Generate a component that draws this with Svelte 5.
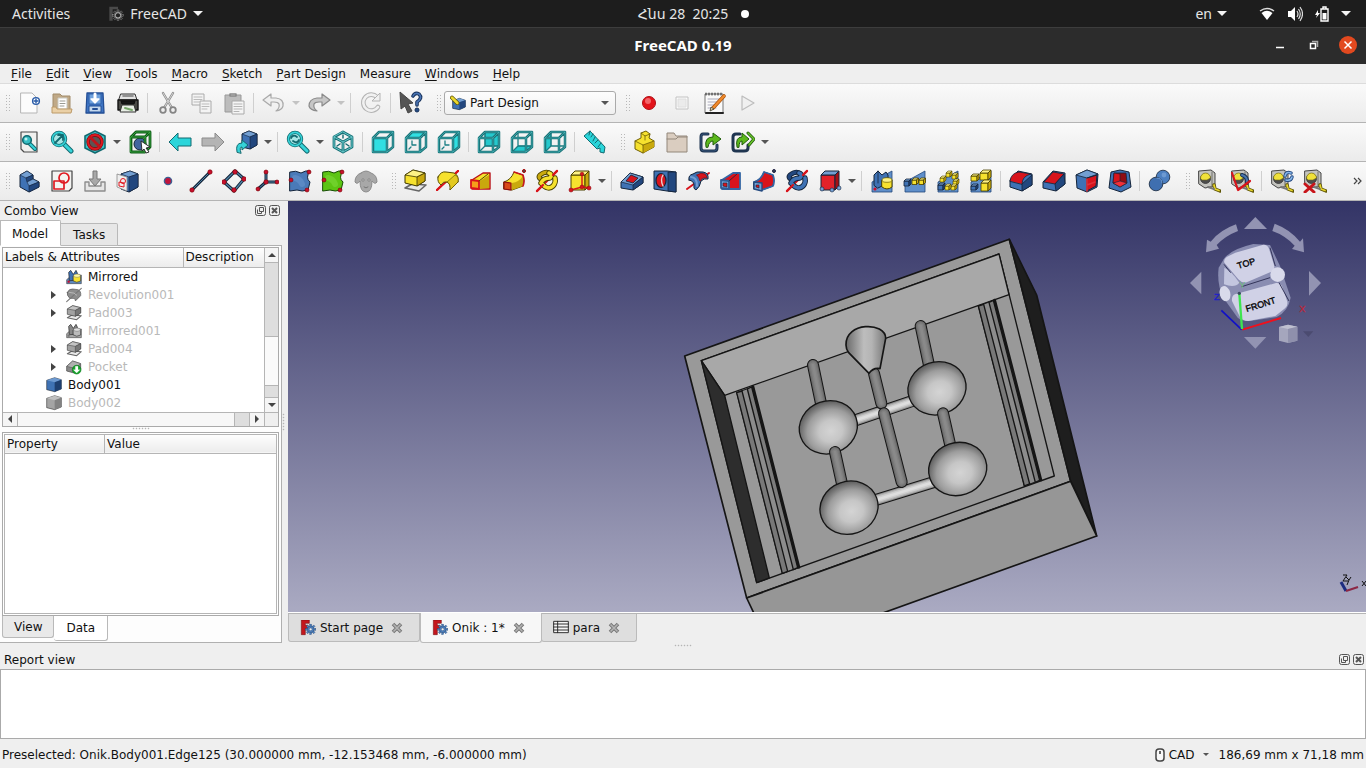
<script>
  const p = (pts, fill, stroke = '#222', w = 1) =>
    `<polygon points="${pts}" fill="${fill}" stroke="${stroke}" stroke-width="${w}" stroke-linejoin="round"/>`;
  const d = (path, stroke, w = 1, fill = 'none') =>
    `<path d="${path}" fill="${fill}" stroke="${stroke}" stroke-width="${w}" stroke-linejoin="round" stroke-linecap="round"/>`;
  const c = (x, y, r, fill, stroke = '#222', w = 1) =>
    `<circle cx="${x}" cy="${y}" r="${r}" fill="${fill}" stroke="${stroke}" stroke-width="${w}"/>`;
  const two = (path, dark, light, w = 3) => d(path, dark, w) + d(path, light, w - 2);
  const box = (x, y, w, h, k, f, t, s, st = '#222', sw = 1) =>
    p(`${x},${y + k} ${x + w},${y + k} ${x + w},${y + h + k} ${x},${y + h + k}`, f, st, sw) +
    p(`${x},${y + k} ${x + k},${y} ${x + w + k},${y} ${x + w},${y + k}`, t, st, sw) +
    p(`${x + w},${y + k} ${x + w + k},${y} ${x + w + k},${y + h} ${x + w},${y + h + k}`, s, st, sw);

  const Y = '#f6e12e', Yd = '#c9a90d', B = '#3f72b4', Bd = '#22477e', Bl = '#739fd2', R = '#d8141c', Rd = '#8f0c12', K = '#14243a';

  const faces = {
    front: '2,8 16,8 16,22 2,22', top: '2,8 8,2 22,2 16,8', right: '16,8 22,2 22,17 16,22',
    back: '8,2 22,2 22,16 8,16', bottom: '2,22 8,16 22,16 16,22', left: '2,8 8,2 8,16 2,22'
  };
  const view = (name) => {
    const wire = 'M2,8H16V22H2ZM2,8L8,2H22V17L16,22M16,8L22,2';
    const rear = 'M8,2V16H22M8,16L2,22';
    const front = ['front', 'top', 'right'].includes(name);
    const inside = name === 'front' ? '' : d(front ? 'M8,11V15L12,15M7,17L5,19' : rear, '#1b7f84', 1.3);
    const fill = p(faces[name], front ? '#30dfe2' : '#25c8cd', '#1b7f84', 0.8);
    return (front ? inside + fill : fill + inside) + two(wire, '#1a7378', '#5fcfd0', 2.5);
  };
  const lens = (inner) =>
    d('M14,14L21,21', '#126a70', 5) + d('M14,14L21,21', '#36d3d8', 3) +
    c(9, 9, 6.6, '#a6e6e6', '#126a70', 3.2) + c(9, 9, 6.6, 'none', '#36d3d8', 1.6) + inner;
  const arrowL = (f, s) => p('1,12 10,3 10,8 23,8 23,16 10,16 10,21', f, s, 1);
  const slab = p('2,13 2,23 22,23 22,2', '#5f8fca', '#24487a', 0.8);
  const tape = (extra = '') =>
    d('M2,2L14,1L18,4L18,17L8,19L2,15Z', '#444', 1, '#c4c4bf') + d('M15,3V17', '#8f8f8b', 1.6) + c(8.500, 9.500, 5, '#4d4d4d', '#333', 0.8) +
    d('M3.500,9A5,5 0 0 1 13.500,9L10,11H5Z', '#6c6414', 0.6, '#f0e13a') + d('M17,16L18,20L23,22', '#5e5404', 3.4) +
    d('M17,16L18,20L22,21.500', '#e6d52c', 1.8) + d('M11,18L17,20', '#777', 2) + extra;
  const gear = (x, y, r, col, st) => {
    let s = '';
    for (let i = 0; i < 8; i++) s += `<rect x="${x - r / 4}" y="${y - r * 1.35}" width="${r / 2}" height="${r * 0.8}" fill="${col}" stroke="${st}" stroke-width=".5" transform="rotate(${i * 45} ${x} ${y})"/>`;
    return s + c(x, y, r * 0.85, col, st, 0.6) + c(x, y, r * 0.35, '#eee', st, 0.6);
  };
  const mirror = (a, b, s, body, dot) =>
    p('1,16 9,9 23,9 23,22 1,22', s, '#333', 0.8) + d('M5,17L4,5L7,2L11,8L15,2L17,6V16Z', '#222', 1, a) +
    d('M11,10Q16,6 22,10V18Q16,22 11,18Z', '#333', 1, body) + `<ellipse cx="16.500" cy="10" rx="5" ry="2.500" fill="${b}" stroke="#555" stroke-width=".6"/>` + c(4, 19, 1.8, dot, 'none', 0);
  const pad = (f, t, s, st) =>
    p('2,19 9,15 23,16 16,22', '#e8e8e8', '#666', 1.6) +
    p('2,6 10,1 22,4 22,12 14,17 2,14', f, st, 1) + p('2,6 10,1 22,4 14,8', t, st, 0.8) + p('14,8 22,4 22,12 14,17', s, st, 0.8);
  const bodyCube = (f, t, s) => p('1,5 13,1 23,4 23,18 13,22 1,19', f, '#222', 0.8) + p('1,5 13,1 23,4 13,8', t, 'none', 0) + p('13,8 23,4 23,18 13,22', s, 'none', 0);
  const helix = (st, back, front) =>
    d('M9,12Q2,9 5,6Q12,1 15,5', st, 5) + d('M9,12Q2,9 5,6Q12,1 15,5', back, 3.2) +
    d('M2,22L22,2', R, 2.2) +
    d('M14,4Q18,5 15,9Q8,9 6,14M6,14Q13,22 18,17Q21,14 20,9', st, 5.4) + d('M14,4Q18,5 15,9Q8,9 6,14M6,14Q13,22 18,17Q21,14 20,9', front, 3.6) +
    d('M2,22L8,16M18,6L22,2', R, 2.2);

  const icons = {
    new: d('M4,2H15L20,7V22H4Z', '#b5b5b5', 1, '#fcfcfc') + c(19, 10, 3.4, '#fff', '#2a5ca8', 1.4) + d('M19,8V12M17,10H21', '#2a5ca8', 1.4),
    open: p('3,3 10,3 12,5 20,5 20,19 3,19', '#c0a987', '#a28c6b', 1) + p('8,7 17,7 17,18 8,18', '#fff', '#c8c8c0', 1) + d('M10,10H15M10,12.5H15M10,15H14', '#9a9a92') + p('2,16 6,16 7,18 22,18 21,22 2,22', '#ead0a6', '#bc9a69', 1),
    save: d('M4,2H20L21,22H3Z', '#234e94', 1.3, '#3f75c4') + p('6,3 18,3 18,13 6,13', '#6fa1dd', '#2f60a8', 1) + d('M12,3V9', '#fff', 3) + d('M8,8L12,12L16,8Z', '#fff', 1.3, '#fff') + p('6,15 18,15 18,21 6,21', '#c3d8ee', '#234e94', 1) + d('M10,18H14', '#234e94', 2),
    print: d('M5,3H19L21,9H3Z', '#333', 1, '#e2e2e2') + d('M2,9H22V19H2Z', '#111', 1.4, '#4a4a46') + p('5,10 19,10 18,13 6,13', '#171717', '#111') + d('M7,5H17', '#777', 1.6) + p('6,14 18,14 20,21 4,21', '#e8eee5', '#333') + d('M9,17L16,19', '#78a86b', 2),
    cut: d('M7,2L16,17M17,2L8,17', '#8b8b8b', 2.4) + d('M7,2L16,17M17,2L8,17', '#ddd', 0.9) + c(7, 19, 2.8, '#eee', '#858585', 1.8) + c(17, 19, 2.8, '#eee', '#858585', 1.8),
    copy: p('3,3 15,3 15,14 3,14', '#f4f4f4', '#aaa') + d('M5,6H13M5,8.5H13M5,11H10', '#bbb') + p('11,10 22,10 22,22 11,22', '#f4f4f4', '#aaa') + d('M13,13H20M13,15.5H20M13,18H18', '#bbb'),
    paste: p('3,4 19,4 19,21 3,21', '#bcbcbc', '#999') + d('M8,5V3H14V5Z', '#888', 1.5, '#ddd') + p('10,10 22,10 22,23 10,23', '#f5f5f5', '#aaa') + d('M12,13H20M12,15.5H20M12,18H20M12,20.5H17', '#b5b5b5'),
    undo: d('M1,9L9,3V7H14Q22,8 21,15Q20,19 14,20Q18,17 17,13Q16,11 12,11H9V15Z', '#a9a9a9', 1.2, '#efefef'),
    redo: d('M23,9L15,3V7H10Q2,8 2,15Q3,19 10,20Q6,17 7,13Q8,11 12,11H15V15Z', '#8a8a8a', 1.2, '#c6c6c6'),
    refresh: d('M18,6A8,8 0 1 0 19,16', '#b4b4b4', 4.6) + d('M18,6A8,8 0 1 0 19,16', '#f1f1f1', 2.6) + p('13,10 21,2 21,10', '#f1f1f1', '#b4b4b4', 1),
    whats: p('1,1 14,12 9,13 13,20 9,22 6,15 2,18', '#555', '#444', 1) + d('M14,5Q16,1 20,3Q24,7 18,11V14', '#17325c', 3.6) + d('M14,5Q16,1 20,3Q24,7 18,11V14', '#4a74b4', 1.6) + c(18, 19, 2, '#254b83', '#17325c', 1),
    rec: c(12, 12, 6.5, '#e3141b', '#b00e14', 1) + c(11, 10, 3, '#f3666a', 'none', 0),
    stop: p('6,6 18,6 18,18 6,18', '#fbfbfb', '#c2c2c2') + p('8,8 16,8 16,16 8,16', '#ebebeb', '#dedede'),
    macro: p('2,3 20,3 20,22 2,22', '#fafafa', '#777', 1) + d('M3,22H20', '#222', 2) + d('M3,2V4M6,2V4M9,2V4M12,2V4M15,2V4M18,2V4', '#444', 1.2) + d('M5,8H17M5,11H16M5,14H14M5,17H13', '#aab') + d('M10,17L21,5', '#a44d09', 3.6) + d('M10,17L21,5', '#f08b2c', 2.4) + p('8,16 7,20 11,18', '#f0d4a8', '#554'),
    play: p('6,5 18,12 6,19', '#f0f0f0', '#bdbdbd', 1.2),
    fitall: d('M4,2H20V22H7L4,19Z', '#4a4a4a', 1.2, '#f0f0ee') + d('M12,13L18,19', '#126a70', 4) + d('M12,13L18,19', '#36d3d8', 2) + c(10, 10, 4.3, '#36bdc2', '#126a70', 1.6) + c(9, 9, 1.5, '#b9f4f2', 'none', 0),
    fitsel: lens(d('M5,13L12,6M8,5H13V10', '#126a70', 1.8)),
    nostyle: p('12,1 22,6 22,18 12,23 2,18 2,6', '#37c9cf', '#126a70', 1.6) + c(12, 12, 7, '#5c5554', '#7b0b10', 3.4) + c(12, 12, 7, 'none', '#dd1a20', 2) + d('M7,7L17,17', '#c2141a', 2.6),
    boxsel: c(12, 14, 6, '#42659e', K, 1) + two('M3,7H17V22H3ZM3,7L8,2H22V17L17,22M17,7L22,2', '#0c5a14', '#3fb046', 2.8) + p('13,11 22,17 18,18 21,22 18,23 16,19 14,21', '#fff', '#222', 0.9),
    back: arrowL('#2bd5da', '#126a70'),
    fwd: `<g transform="translate(24 0) scale(-1 1)">${arrowL('#b4b4b4', '#8b8b8b')}</g>`,
    link: p('8,4 15,1 23,4 23,15 16,19 8,17', B, K, 1) + p('8,4 15,1 23,4 16,7', Bl, K, 0.6) + p('16,7 23,4 23,15 16,19', Bd, K, 0.6) + d('M3,22Q1,13 8,13V10L14,15L8,20V17Q5,17 7,23Z', '#126a70', 1, '#36d3d8'),
    zoomv: lens(d('M5,8Q7,4 11,7M13,10Q11,14 7,11', '#126a70', 1.8)),
    iso: d('M12,2L21,7V17L12,22L3,17V7ZM3,7L12,12L21,7M12,12V22', '#1a7378', 2.8) + d('M12,2L21,7V17L12,22L3,17V7ZM3,7L12,12L21,7M12,12V22', '#6fd0d2', 0.9) + d('M12,5V8M6,16L9,14M18,16L15,14', '#126a70', 1.4),
    front: view('front'), top: view('top'), right: view('right'), rear: view('back'), bottom: view('bottom'), left: view('left'),
    measure: p('1,6 7,1 22,17 21,23 17,22 17,18 14,19', '#2bd5da', '#126a70', 1) + d('M7,1L6,5M10,4L8,7M12,7L10,11M15,10L12,13M18,13L15,17', '#126a70', 1),
    part: p('3,11 9,8 9,3 14,1 18,4 17,8 22,11 22,17 11,23 3,19', Y, '#6f5e04', 1) + p('11,15 22,11 22,17 11,23', Yd, 'none', 0) + d('M3,11L11,15V23M11,15L22,11M9,3L13,6L18,4M13,6V10', '#6f5e04', 0.8),
    group: p('2,3 9,3 11,6 22,6 22,22 2,22', '#dacdc0', '#92877a', 1) + d('M2,9H11L13,7H22', '#92877a', 1),
    linkmake: d('M10,4H5Q3,4 3,7V18Q3,21 6,21H16Q19,21 19,18V15', '#1f3550', 3) + d('M10,4H5Q3,4 3,7V18Q3,21 6,21H16Q19,21 19,18V15', '#3a5c85', 0.8) + d('M8,17Q6,7 15,7V3L23,9L15,15V11Q11,11 10,17Z', '#205c0a', 1, '#5cb81c'),
    linkgroup: d('M9,4H5Q2,4 2,7V18Q2,21 5,21H13Q17,21 17,18V15', '#1f3550', 3) + d('M6,17Q4,7 11,7V3L18,9L11,15V11Q8,11 8,17Z', '#205c0a', 1, '#5cb81c') + d('M17,3L23,9L18,15', '#205c0a', 3) + d('M17,3L23,9L18,15', '#6cc62c', 1.4),
    body: p('3,6 10,2 16,6 16,10 22,13 22,18 12,23 3,18', B, K, 1) + p('3,6 10,2 16,6 9,9', Bl, K, 0.6) + p('9,9 16,6 16,10 10,13', Bd, K, 0.6) + p('10,13 16,10 22,13 12,17', Bl, K, 0.6) + p('12,17 22,13 22,18 12,23', Bd, K, 0.6),
    sketch: d('M2,2H22V19L19,22H2Z', '#444', 1.2, '#f3f3f1') + p('4,12 14,12 14,20 4,20', 'none', '#e01820', 1.7) + c(14, 9, 5, 'none', '#e01820', 1.7),
    import: d('M2,13H6V17H18V13H22V22H2Z', '#8d8d8d', 1.4, '#e6e6e6') + p('10,2 14,2 14,10 18,10 12,17 6,10 10,10', '#a8a8a8', '#777', 1),
    mapsk: p('5,5 14,2 22,5 22,18 13,23 5,20', B, K, 1) + p('5,5 14,2 22,5 13,8', Bl, K, 0.6) + p('13,8 22,5 22,18 13,23', Bd, K, 0.6) + p('1,5 11,8 11,22 1,18', '#eee', '#888', 0.8) + p('3,13 8,14 8,18 3,17', 'none', '#e01820', 1) + c(7, 12, 2.5, 'none', '#e01820', 1),
    point: c(12, 12, 3.6, '#c0143c', '#3c5f92', 1.4),
    line: two('M3,21L21,3', K, '#4f86a8', 3) + c(3, 21, 2.2, '#c8102e', '#700', 0.6) + c(21, 3, 2.2, '#c8102e', '#700', 0.6),
    plane: two('M2,13L13,2L22,10L12,22Z', K, '#4f86a8', 3.2) + c(2, 13, 2.3, '#c8102e', '#700', 0.6) + c(13, 3, 2.3, '#c8102e', '#700', 0.6) + c(22, 10, 2.3, '#c8102e', '#700', 0.6) + c(12, 21, 2.3, '#c8102e', '#700', 0.6),
    lcs: two('M11,3V13L3,20M11,13H22', K, '#4f86a8', 3) + c(11, 3, 2, '#c8102e', '#700', 0.6) + c(3, 20, 2, '#c8102e', '#700', 0.6) + c(22, 13, 2, '#c8102e', '#700', 0.6) + c(11, 13, 2.2, '#c8102e', '#700', 0.6),
    shape: d('M2,3Q8,1 13,4Q18,1 22,2Q17,9 22,13L20,21Q14,23 9,21L2,22Z', K, 1, '#4a7ab8') + d('M7,9Q12,10 14,15', '#5b89c4', 6) + c(21, 3, 2, '#c8102e', '#700', 0.6) + c(3, 11, 2, '#c8102e', '#700', 0.6) + c(19, 21, 2, '#c8102e', '#700', 0.6),
    clone: d('M2,3Q8,1 13,4Q18,1 22,2Q17,9 22,13L20,21Q14,23 9,21L2,22Z', '#174d04', 1, '#5cc414') + d('M7,9Q12,10 14,15', '#6fd02a', 6) + c(21, 3, 2, '#c8102e', '#700', 0.6) + c(3, 11, 2, '#c8102e', '#700', 0.6) + c(19, 21, 2, '#c8102e', '#700', 0.6),
    sheep: d('M7,4Q12,0 17,4Q23,6 23,13Q21,16 18,12Q18,23 12,23Q6,23 6,12Q3,16 1,13Q1,6 7,4Z', '#8b8b8b', 1, '#a8a8a8') + c(9, 11, 1.1, '#eee', '#666', 0.7) + c(15, 11, 1.1, '#eee', '#666', 0.7) + d('M10,18Q12,20 14,18', '#777'),
    pad: pad(Y, '#fdf285', Yd, '#3d3600'),
    rev: d('M1,21L22,2', R, 2) + d('M2,8Q5,2 10,3L18,4Q23,6 22,13L14,21Q15,15 11,13Q7,12 5,16Q1,13 2,8Z', '#554a00', 1, Y) + d('M22,13L14,21Q15,15 11,13L19,6Q23,7 22,13Z', '#554a00', 0.6, '#e3c91f') + d('M20,4L22,2M1,21L5,17', R, 2),
    loft: p('3,11 14,4 21,4 21,20 3,20', Y, '#b81018', 1.4) + p('11,12 20,6 20,19 11,20', Yd, 'none', 0) + p('2,11 10,12 10,20 2,19', '#f5a01a', R, 1.8) + d('M10,12L19,5', '#554a00'),
    sweep: d('M2,13Q9,11 12,3L21,6Q23,12 21,17L10,21L2,20Z', '#554a00', 1, Y) + d('M10,14Q17,13 21,7L21,17L10,21Z', 'none', 0, Yd) + d('M12,3L21,6Q23,12 21,17', '#c81820', 1.6) + p('2,13 9,14 9,21 2,20', '#d94a1a', Rd, 1.2) + c(22, 2, 1.5, '#455', '#a00', 1),
    helix: helix('#4a4000', Yd, Y),
    prim: box(3, 2, 14, 15, 4, Y, '#fdf285', Yd, '#4a4000') + d('M3,21L14,18L21,19M14,18V5', R, 1.4) + c(3, 21, 2, R, Rd, 0.6) + c(14, 18, 2, R, Rd, 0.6) + c(21, 19, 2, R, Rd, 0.6) + c(14, 5, 1.8, R, Rd, 0.6),
    pocket: p('1,13 10,4 23,8 23,14 13,21 1,19', B, K, 1) + p('1,13 10,4 23,8 13,16', Bl, K, 0.7) + p('6,12 11,6 18,9 13,14', R, K, 0.8) + p('13,16 23,8 23,14 13,21', Bd, K, 0.7),
    hole: p('1,2 14,2 23,3 23,23 14,22 1,20', B, K, 1) + p('15,3 23,3 23,23 15,22', Bd, K, 0.8) + `<ellipse cx="8" cy="11.500" rx="5" ry="7" fill="${R}" stroke="${K}" stroke-width="1.200"/>` + d('M10,6Q7,11 10,17', '#e8cfd0', 1.4),
    groove: d('M1,20L23,4', R, 2) + d('M3,11Q2,6 7,5Q10,2 17,3Q23,4 22,10Q18,9 15,12Q14,18 10,21Q7,20 8,16Q8,12 3,11Z', K, 1, B) + d('M11,6Q15,3 19,5Q21,7 21,9Q16,8 14,12Q13,8 11,6Z', Rd, 0.8, R) + d('M5,8Q11,8 11,17', Bl, 2),
    subloft: p('3,11 14,4 21,4 21,20 3,20', R, '#3566a4', 1.8) + p('2,11 10,12 10,20 2,19', Bl, '#2f5c96', 1.8) + p('4,14 8,14 8,18 4,17', R, K, 0.6) + d('M10,12L18,5', K, 0.8),
    subsweep: d('M2,13Q9,11 12,3L21,6Q23,12 21,17L10,21L2,20Z', K, 1, R) + d('M2,13Q9,11 12,3L21,6Q23,12 21,17L10,21', '#3566a4', 1.8) + p('2,13 10,14 10,22 2,20', Bl, '#254b80', 1.4) + p('4,16 7,16 7,19 4,18', R, K, 0.6) + c(22, 2, 1.5, '#345', '#224', 1),
    subhelix: helix(K, Bd, B),
    subprim: box(3, 2, 14, 15, 4, '#e2222a', Bl, '#a51015', K) + c(4, 20, 2, Bl, K, 0.6) + c(14, 21, 2, Bl, K, 0.6) + c(21, 19, 2, Bl, K, 0.6),
    mirrored: slab + d('M4,16L4,6L8,2L12,6L16,3L18,6V14L8,19Z', K, 1, B) + d('M8,2V14', K, 0.8) + d('M12,11Q17,7 22,11V18Q17,22 12,18Z', '#4a4000', 1, Y) + `<ellipse cx="17" cy="11" rx="5" ry="2.300" fill="#fdf285" stroke="#665a00" stroke-width=".7"/>` + c(5, 20, 1.6, '#c8102e', 'none', 0),
    linear: slab + box(1, 10, 5, 5, 2, B, Bl, Bd, K, 0.8) + box(9, 9, 4.5, 4.5, 2, Y, '#fdf285', Yd, '#4a4000', 0.8) + box(16, 9, 4.5, 4.5, 2, Y, '#fdf285', Yd, '#4a4000', 0.8),
    polar: slab + box(2, 14, 5, 5, 2, B, Bl, Bd, K, 0.8) + [[4, 7], [10, 2], [16, 4], [17, 10], [15, 15], [9, 15]].map(([x, y]) => box(x, y, 4, 4, 2, Y, '#fdf285', Yd, '#4a4000', 0.6)).join(''),
    multi: slab + box(11, 1, 8, 7, 3, Y, '#fdf285', Yd, '#4a4000', 0.8) + box(2, 5, 6, 5, 2, Y, '#fdf285', Yd, '#4a4000', 0.8) + box(12, 11, 7, 8, 3, Y, '#fdf285', Yd, '#4a4000', 0.8) + box(2, 15, 5, 4, 2, B, Bl, Bd, K, 0.8),
    fillet: p('1,11 9,2 23,5 23,16 13,22 1,18', B, K, 1) + d('M1,12Q2,4 10,3L22,5Q13,7 13,15Z', K, 0.8, R) + p('13,15 23,6 23,16 13,22', Bd, K, 0.8),
    chamfer: p('1,13 11,2 23,4 23,15 14,22 1,19', B, K, 1) + p('2,13 11,3 22,5 13,15', R, K, 0.8) + p('13,15 22,5 23,15 14,22', Bd, K, 0.8),
    draft: p('1,6 12,1 23,5 22,18 12,23 2,19', B, K, 1) + p('1,6 12,1 23,5 12,9', Bl, K, 0.8) + p('12,9 22,6 21,17 12,22', R, K, 1) + d('M12,10V22M12,16L20,13', '#e23038', 1.6),
    thick: p('3,3 12,1 21,3 23,18 13,23 1,19', B, K, 1) + p('6,4 18,4 19,14 12,18 5,14', Rd, K, 0.8) + p('6,4 12,5 12,13 5,14', R, K, 0.6) + p('5,14 12,12 19,14 12,18', '#f03038', K, 0.6),
    bool: c(15, 8, 6.8, '#4c7fc0', K, 0.8) + c(8, 15, 6.8, '#3f6fb0', K, 0.8) + d('M9,9Q14,9 14,14', '#6f9bd1', 1) + c(16, 6, 2.4, '#6d9ad2', 'none', 0),
    tape: tape(), tape2: tape(d('M12,6Q18,8 17,14', '#1c3558', 4) + d('M12,6Q18,8 17,14', '#4a78b0', 2) + d('M2,4L8,21L20,12', R, 2.2)),
    tape3: tape(d('M15,7Q16,2 21,4M22,8Q21,12 16,11', '#254b83', 3.4) + d('M15,7Q16,2 21,4M22,8Q21,12 16,11', '#86b6ea', 1.6)),
    tape4: tape(d('M2,15L11,23M11,15L2,23', '#c8141a', 3)),
    wb: p('4,9 14,5 23,8 23,18 14,22 4,20', B, K, 1) + p('4,9 14,5 23,8 14,11', Bl, 'none', 0) + p('14,11 23,8 23,18 14,22', Bd, 'none', 0) + d('M3,4L11,12', '#5c5208', 6) + d('M3,4L11,12', '#ecd92c', 4),
    t_mirror: mirror(B, '#fff9a0', '#5c88be', Y, '#c8102e'),
    t_mirrorg: mirror('#888', '#ddd', '#a8a8a8', '#bbb', '#777'),
    t_rev: d('M2,8Q5,2 10,3L18,4Q23,6 22,13L14,21Q15,17 9,17Q5,18 5,16Q1,13 2,8Z', '#555', 1, '#8d8d8d') + d('M1,22L23,2', '#777', 1.6) + d('M5,8Q13,8 16,12', '#bbb', 1.4),
    t_pad: pad('#a2a2a2', '#c4c4c4', '#777', '#444'),
    t_pocket: p('1,11 10,3 22,7 22,15 12,21 1,18', '#888', '#444', 1) + p('1,11 10,3 22,7 13,14', '#b0b0b0', '#555', 0.8) + c(16, 16, 6.5, '#16a32a', '#0c7d1c', 1) + p('14,11 18,11 18,16 21,16 16,21 11,16 14,16', '#fff', '#fff', 0.3),
    t_body: bodyCube('#3f72b4', '#6d99d0', '#1e3f70'),
    t_bodyg: bodyCube('#a4a4a4', '#c0c0c0', '#828282'),
    fc: p('2,0 14,0 14,5 8,5 8,8 12,8 12,13 8,13 8,22 2,22', '#c4161d', '#6c0a0e', 0.8) + gear(16, 14, 5.8, '#4f80bd', '#1d3d68'),
    fcmono: p('2,1 15,1 15,5 7,5 7,22 2,22', '#4a4a4a', 'none', 0) + gear(15, 14, 6, '#303030', '#bbb') + c(15, 14, 4, '#222', '#c8c8c8', 1.3),
    sheet: p('1,2 23,2 23,19 1,19', '#f6f6f6', '#222', 1.4) + d('M1,6H23M1,10.500H23M1,15H23M7,2V19', '#222', 1.4)
  };

  const b = (icon, label, off = false) => ({ icon, label, off });
  const m = (icon, label, off = false) => ({ icon, label, off, menu: true });
  const sep = { sep: true };
  const rows = [
    [
      [b('new', 'New'), b('open', 'Open'), b('save', 'Save'), b('print', 'Print'), sep, b('cut', 'Cut', true), b('copy', 'Copy', true), b('paste', 'Paste', true), sep, m('undo', 'Undo', true), m('redo', 'Redo', true), sep, b('refresh', 'Refresh', true), sep, b('whats', 'Help pointer')],
      [{ combo: true }],
      [b('rec', 'Record macro'), b('stop', 'Stop macro', true), b('macro', 'Macros'), b('play', 'Run macro', true)]
    ],
    [
      [b('fitall', 'Fit all'), b('fitsel', 'Fit selection'), m('nostyle', 'Draw style'), b('boxsel', 'Box selection'), sep, b('back', 'Back'), b('fwd', 'Forward'), m('link', 'Go to linked object'), sep, m('zoomv', 'Sync view'), b('iso', 'Isometric'), sep, b('front', 'Front'), b('top', 'Top'), b('right', 'Right'), sep, b('rear', 'Rear'), b('bottom', 'Bottom'), b('left', 'Left'), sep, b('measure', 'Measure distance')],
      [b('part', 'Create part'), b('group', 'Create group'), b('linkmake', 'Make link'), m('linkgroup', 'Make link group')]
    ],
    [
      [b('body', 'Create body'), b('sketch', 'Create sketch'), b('import', 'Edit sketch'), b('mapsk', 'Map sketch'), sep, b('point', 'Datum point'), b('line', 'Datum line'), b('plane', 'Datum plane'), b('lcs', 'Coordinate system'), b('shape', 'Shape binder'), b('clone', 'Sub-shape binder'), b('sheep', 'Clone')],
      [b('pad', 'Pad'), b('rev', 'Revolution'), b('loft', 'Loft'), b('sweep', 'Pipe'), b('helix', 'Helix'), m('prim', 'Primitive'), sep, b('pocket', 'Pocket'), b('hole', 'Hole'), b('groove', 'Groove'), b('subloft', 'Subtractive loft'), b('subsweep', 'Subtractive pipe'), b('subhelix', 'Subtractive helix'), m('subprim', 'Subtractive primitive'), sep, b('mirrored', 'Mirrored'), b('linear', 'Linear pattern'), b('polar', 'Polar pattern'), b('multi', 'Multi transform'), sep, b('fillet', 'Fillet'), b('chamfer', 'Chamfer'), b('draft', 'Draft'), b('thick', 'Thickness'), sep, b('bool', 'Boolean')],
      [b('tape', 'Measure linear'), b('tape2', 'Measure angular'), sep, b('tape3', 'Refresh measurements'), b('tape4', 'Clear measurements')]
    ]
  ];

  const menus = ['File', 'Edit', 'View', 'Tools', 'Macro', 'Sketch', 'Part Design', 'Measure', 'Windows', 'Help'];
  const tree = [
    ['t_mirror', 'Mirrored', 2, false, true], ['t_rev', 'Revolution001', 2, true, false], ['t_pad', 'Pad003', 2, true, false],
    ['t_mirrorg', 'Mirrored001', 2, false, false], ['t_pad', 'Pad004', 2, true, false], ['t_pocket', 'Pocket', 2, true, false],
    ['t_body', 'Body001', 1, false, true], ['t_bodyg', 'Body002', 1, false, false]
  ];
  const docs = [['fc', 'Start page'], ['fc', 'Onik : 1*'], ['sheet', 'para']];

  const rod = (path, tones) => [36, 30, 24, 16, 8].map((w, i) => d(path, tones[i], w)).join('');
  const dark = ['#151515', '#686868', '#787878', '#838383', '#8a8a8a'];
  const light = ['#151515', '#8d8d8d', '#b4b4b4', '#cecece', '#dedede'];
  const ball = (x, y) => `<ellipse cx="${x}" cy="${y}" rx="88" ry="79" transform="rotate(-19 ${x} ${y})" fill="url(#ball)" stroke="#151515" stroke-width="4"/>`;
  const rail = (x, y, x2, y2) =>
    p(`${x},${y} ${x + 49},${y - 18} ${x2 + 50},${y2 - 18} ${x2},${y2}`, '#8c8c8c', '#151515', 3) +
    p(`${x},${y} ${x + 16},${y - 5} ${x2 + 16},${y2 - 6} ${x2},${y2}`, '#787878', '#151515', 4) +
    p(`${x + 32},${y - 11} ${x + 45},${y - 17} ${x2 + 46},${y2 - 17} ${x2 + 33},${y2 - 11}`, '#7c7c7c', '#151515', 4) +
    d(`M${x + 49},${y - 18}L${x2 + 50},${y2 - 18}`, '#151515', 8);
  const model =
    p('14,378 988,28 1172,754 200,1104', '#999', '#151515', 5) +
    p('988,28 1070,195 1250,918 1172,754', '#1e1e1e', '#151515', 5) +
    p('200,1104 1172,754 1250,918 278,1268', '#969696', '#151515', 5) +
    p('64,392 957,72 1123,738 230,1058', '#999', '#151515', 4) +
    p('64,392 957,72 987,194 134,496', '#a8a8a8', '#151515', 4) +
    p('64,392 134,496 268,1044 230,1058', '#2d2d2d', '#151515', 4) +
    rail(170, 488, 307, 1030) + rail(895, 228, 1033, 768) +
    rod('M520,573L700,512', light) + rod('M580,812L760,757', light) +
    rod('M399,405L425,530', dark) + rod('M722,288L750,420', dark) + rod('M582,430L604,520', dark) +
    d('M498,345C495,275 617,275 617,325L600,416Q580,412 567,430L506,368Q498,358 498,345Z', '#151515', 5, 'url(#cone)') +
    rod('M612,550L665,756', dark) + ball(445, 592) + ball(771, 475) +
    rod('M465,666L490,780', dark) + rod('M789,550L814,660', dark) + ball(507, 833) + ball(833, 717);

  let report = $state('');
</script>

{#snippet ico(name, size = 24)}
  <svg width={size} height={size} viewBox="0 0 24 24" aria-hidden="true">{@html icons[name]}</svg>
{/snippet}

{#snippet dockButtons()}
  <span class="dock-buttons">
    <button aria-label="Float"><svg width="11" height="11" viewBox="0 0 11 11"><rect x=".5" y=".5" width="10" height="10" rx="2" /><path d="M4.500 2.500h4v4h-4zM2.500 4.500v4h4v-2" /></svg></button>
    <button aria-label="Close panel"><svg width="11" height="11" viewBox="0 0 11 11"><rect x=".5" y=".5" width="10" height="10" rx="2" /><path class="thick" d="M3 3l5 5M8 3l-5 5" /></svg></button>
  </span>
{/snippet}

<div class="screen">
  <header class="shell">
    <div class="shell-left">
      <button>Activities</button>
      <button class="app">{@render ico('fcmono', 16)}FreeCAD<i class="tri"></i></button>
    </div>
    <button class="clock">Հնս 28&nbsp; 20:25<i class="dot"></i></button>
    <div class="shell-right">
      <button class="lang">en<i class="tri"></i></button>
      <button class="tray" aria-label="System menu">
        <svg width="16" height="14" viewBox="0 0 16 14"><path d="M1 4Q8-1 15 4" fill="none" stroke="#ddd" stroke-width="1.4" /><path d="M2.500 6Q8 1.500 13.500 6L8 13Z" fill="#fff" /></svg>
        <svg width="16" height="16" viewBox="0 0 16 16"><path d="M1 5h3l4-4v14l-4-4H1Z" fill="#fff" /><path d="M10 5Q12 8 10 11M11.500 3Q15 8 11.500 13M13 1Q18 8 13 15" fill="none" stroke="#ddd" stroke-width="1.200" /></svg>
        <svg width="14" height="16" viewBox="0 0 14 16"><path d="M3 4L0 9h2l-1 3 4-5H3Z" fill="#fff" /><path d="M6 3h7v12H6ZM8 1h3v2H8Z" fill="none" stroke="#fff" stroke-width="1.400" /><path d="M7.500 7h4v6.500h-4Z" fill="#fff" /></svg>
        <i class="tri"></i>
      </button>
    </div>
  </header>

  <div class="titlebar">
    <h1>FreeCAD 0.19</h1>
    <div class="window-buttons">
      <button aria-label="Minimize"><svg width="10" height="10" viewBox="0 0 10 10"><path d="M1 7.500H9" /></svg></button>
      <button aria-label="Restore"><svg width="10" height="10" viewBox="0 0 10 10"><path d="M1.500 3.500h5v5h-5z" /><path d="M3 1.500H8.500V7" opacity=".6" /></svg></button>
      <button class="close" aria-label="Close"><svg width="10" height="10" viewBox="0 0 10 10"><path d="M1.500 1.500l7 7M8.500 1.500l-7 7" /></svg></button>
    </div>
  </div>

  <nav class="menubar">
    {#each menus as item}<button>{#if item === 'Measure'}{item}{:else}<u>{item[0]}</u>{item.slice(1)}{/if}</button>{/each}
  </nav>

  {#each rows as groups, r}
    <div class="toolbar">
      {#each groups as items}
        <div class="group">
          <i class="handle"></i>
          {#each items as it}
            {#if it.sep}
              <i class="sep"></i>
            {:else if it.combo}
              <label class="combo">
                {@render ico('wb', 16)}
                <select aria-label="Workbench"><option>Part Design</option></select>
                <i class="arrow"></i>
              </label>
            {:else}
              <button class="tool" class:off={it.off} aria-label={it.label}>
                <span>{@render ico(it.icon)}</span>
                {#if it.menu}<i class="arrow"></i>{/if}
              </button>
            {/if}
          {/each}
        </div>
      {/each}
      {#if r === 2}<button class="more" aria-label="More tools"><svg width="9" height="8" viewBox="0 0 9 8"><path d="M1 1l3 3-3 3M5 1l3 3-3 3" fill="none" stroke="#444" stroke-width="1.200" /></svg></button>{/if}
    </div>
  {/each}

  <main>
    <aside>
      <div class="dock-title"><h2>Combo View</h2>{@render dockButtons()}</div>
      <div class="tabs"><button class="active">Model</button><button>Tasks</button></div>
      <div class="pane">
        <div class="tree">
          <div class="tree-body">
            <table>
              <thead><tr><th class="labels">Labels &amp; Attributes</th><th>Description</th></tr></thead>
              <tbody>
                {#each tree as [icon, name, depth, kids, on]}
                  <tr class:dim={!on}><td colspan="2"><div class="node" class:deep={depth === 2}><i class="twist" class:kids></i>{@render ico(icon, 16)}<span>{name}</span></div></td></tr>
                {/each}
              </tbody>
            </table>
            <div class="vscroll"><button aria-label="Scroll up"><i class="up"></i></button><div class="track upper"></div><div class="thumb"></div><div class="track lower"></div><button aria-label="Scroll down"><i class="down"></i></button></div>
          </div>
          <div class="hscroll"><button aria-label="Scroll left"><i class="lt"></i></button><div class="thumb"></div><div class="track"></div><button aria-label="Scroll right"><i class="rt"></i></button><div class="corner"></div></div>
        </div>
        <i class="split"></i>
        <div class="props">
          <table><thead><tr><th class="prop">Property</th><th>Value</th></tr></thead></table>
        </div>
        <div class="bottom-tabs"><button>View</button><button class="active">Data</button></div>
      </div>
    </aside>
    <i class="vsplit"></i>

    <section class="mdi">
      <div class="viewport">
        <svg class="scene" viewBox="288 201 1078 411" preserveAspectRatio="xMidYMid slice" aria-label="3D view">
          <defs>
            <radialGradient id="ball" cx=".52" cy=".58" r=".58"><stop offset="0" stop-color="#d4d4d4" /><stop offset=".35" stop-color="#c6c6c6" /><stop offset=".7" stop-color="#9c9c9c" /><stop offset="1" stop-color="#585858" /></radialGradient>
            <linearGradient id="cone"><stop offset="0" stop-color="#6a6a6a" /><stop offset=".45" stop-color="#bdbdbd" /><stop offset=".65" stop-color="#b4b4b4" /><stop offset="1" stop-color="#777" /></linearGradient>
          </defs>
          <g transform="translate(680 230) scale(.33333)">{@html model}</g>
        </svg>
        <svg class="navcube" width="196" height="160" viewBox="0 0 588 480" aria-label="Navigation cube">
          <g fill="#9293b2">
            <path d="M256 48L291 84H222Z" /><path d="M60 246L94 212V280Z" /><path d="M453 246L417 210V284Z" /><path d="M222 408H289L256 443Z" />
            <path d="M198 70L204 90Q165 105 140 132L147 143L108 154L111 116L122 122Q150 87 198 70Z" />
            <path d="M314 68L307 90Q345 103 374 134L366 144L402 154L399 112L390 122Q360 85 314 68Z" />
          </g>
          <path d="M161 175Q180 145 250 129L300 132L330 195L362 290Q355 330 320 348L240 360Q215 360 203 350L160 290Q140 250 146 200Z" fill="#9599bc" opacity=".85" />
          <path d="M196 155L280 131Q292 130 297 143L313 195Q314 208 302 213L230 244Q215 247 205 235L163 185Q160 175 170 168Z" fill="#d0d1e6" />
          <path d="M195 280L318 246Q332 245 337 258L352 302Q354 315 345 322L316 345L235 360Q218 360 210 348L186 300Q184 285 195 280Z" fill="#d0d1e6" />
          <path d="M163 200Q185 210 208 245Q195 262 162 250Z" fill="#c3c6df" />
          <ellipse cx="165" cy="278" rx="16" ry="23" fill="#d9daeb" transform="rotate(-15 165 278)" /><ellipse cx="323" cy="221" rx="22" ry="22" fill="#d9daeb" />
          <path d="M300 140L316 195M215 257L300 230M327 245L357 300M162 190L182 215" stroke="#34355a" stroke-width="3" fill="none" />
          <g font-family="Liberation Sans, sans-serif" fill="#000" stroke="#000" stroke-width="1">
            <text transform="translate(205 204) rotate(-17)" font-size="27">TOP</text><text transform="translate(230 333) rotate(-17)" font-size="27">FRONT</text>
          </g>
          <path d="M154 328L215 386" stroke="#1010c8" stroke-width="5" /><path d="M217 386L333 351" stroke="#f0101c" stroke-width="6" /><path d="M208 278L216 384" stroke="#3de450" stroke-width="7" /><circle cx="208" cy="277" r="5" fill="#3a4a60" />
          <g font-family="Liberation Sans, sans-serif" font-size="28"><text x="132" y="297" fill="#2020c8" stroke="#2020c8">Z</text><text x="388" y="334" fill="#b8283c" stroke="#b8283c">X</text><text x="208" y="261" fill="#6fbf80">Y</text></g>
          <path d="M327 378L354 371L382 377V419L354 426L327 419Z" fill="#a5a6bd" /><path d="M327 378L354 371L382 377L354 384Z" fill="#bfc0d0" /><path d="M354 384L382 377V419L354 426Z" fill="#8f90ac" />
          <path d="M399 391H430L415 408Z" fill="#4b4b70" />
        </svg>
        <svg class="axes" width="28" height="24" viewBox="0 0 28 24" aria-label="Axis cross"><path d="M8 18L3 9" stroke="#1c2c80" stroke-width="3" /><path d="M8 18L20 14" stroke="#8c2744" stroke-width="2" /><path d="M5 2h4L5 8h5M8 4l3 3 2-3M11 7l-2 5M24 8l4 5M28 8l-4 5" stroke="#111" fill="none" /></svg>
      </div>
      <div class="doc-tabs">
        {#each docs as [icon, name], i}
          <div class="doc" class:active={i === 1}>
            <button>{@render ico(icon, 16)}<span>{name}</span></button>
            <button class="x" aria-label="Close tab"><svg width="12" height="12" viewBox="0 0 12 12"><path d="M2 2l8 8M10 2l-8 8" stroke="#777" stroke-width="3.600" /><path d="M2.500 2.500l7 7M9.500 2.500l-7 7" stroke="#b4b4b4" stroke-width="1.600" /></svg></button>
          </div>
        {/each}
      </div>
    </section>
  </main>

  <section class="report">
    <i class="split"></i>
    <div class="dock-title"><label for="report">Report view</label>{@render dockButtons()}</div>
    <textarea id="report" readonly bind:value={report}></textarea>
  </section>

  <footer>
    <span>Preselected: Onik.Body001.Edge125 (30.000000 mm, -12.153468 mm, -6.000000 mm)</span>
    <span class="status-right">
      <button><svg width="10" height="14" viewBox="0 0 10 14"><rect x="1" y="1" width="8" height="12" rx="3" fill="#f8f8f8" stroke="#444" stroke-width="1.500" /><path d="M5 3v3" stroke="#333" stroke-width="1.500" /></svg>CAD<i class="arrow small"></i></button>
      <span>186,69 mm x 71,18 mm</span>
    </span>
  </footer>
</div>

<style>
  :global(body) { margin: 0; background: #efefef; }
  .screen { display: flex; flex-direction: column; min-height: 100vh; box-sizing: border-box; overflow: hidden; background: #efefef; color: #111; font: 12px/18px "DejaVu Sans", sans-serif; }
  .screen :global(*) { box-sizing: border-box; }
  .screen :global(svg) { display: block; flex: none; }
  button { display: flex; align-items: center; margin: 0; padding: 0; border: 0; background: none; color: inherit; font: inherit; white-space: nowrap; }
  h1, h2 { margin: 0; font: inherit; }
  i { display: block; flex: none; }
  table { border-collapse: collapse; border-spacing: 0; }

  .shell { display: grid; grid-template-columns: 1fr auto 1fr; height: 27px; padding: 0 15px 0 12px; background: #1d1d1d; color: #e6e6e6; font: 14px/27px "Noto Sans", "DejaVu Sans", sans-serif; }
  .shell-left { display: flex; gap: 38px; }
  .app { gap: 6px; }
  .clock { padding-left: 24px; gap: 13px; }
  .dot { width: 8px; height: 8px; border-radius: 50%; background: #fff; }
  .shell-right { display: flex; justify-content: flex-end; gap: 32px; }
  .lang { gap: 5px; }
  .tray { gap: 12px; }
  .tri { width: 0; border: 5px solid transparent; border-top-color: #f4f4f4; border-bottom: 0; }
  .titlebar { display: grid; grid-template-columns: 1fr auto 1fr; align-items: center; height: 37px; padding: 0 9px; border-top: 1px solid #3d3d3d; background: #2c2c2c; color: #fff; }
  .titlebar h1 { grid-column: 2; padding-bottom: 2px; font: bold 15px/20px "Noto Sans", sans-serif; }
  .window-buttons { display: flex; justify-content: flex-end; align-items: center; gap: 20px; padding-bottom: 2px; }
  .window-buttons svg { fill: none; stroke: #fff; stroke-width: 1.5; }
  .window-buttons button { justify-content: center; width: 14px; height: 18px; }
  .window-buttons .close { width: 18px; border-radius: 50%; background: #e2491f; margin-left: -2px; }

  .menubar { display: flex; gap: 14px; height: 20px; padding: 0 11px; border-bottom: 1px solid #dcdcdc; }
  u { text-underline-offset: 2px; }
  .toolbar { display: flex; gap: 4px; height: 39px; border-bottom: 1px solid #b4b4b4; background: linear-gradient(#fafafa, #ebebeb); }
  .group { display: flex; align-items: center; }
  .handle { width: 12px; height: 18px; padding: 0 2px 0 5px; background: radial-gradient(circle, #b8b8b8 30%, transparent 45%) 5px 0 / 3px 3px; background-clip: content-box; }
  .tool { height: 34px; }
  .tool span { display: flex; justify-content: center; width: 33px; }
  .tool.off .arrow { opacity: 0.3; }
  .arrow { width: 0; border: 4px solid transparent; border-top-color: #555; border-bottom: 0; }
  .tool .arrow { margin: 0 2px; }
  .arrow.small { border-width: 3px 3px 0; }
  .sep { width: 1px; height: 20px; margin: 0 3px; background: #cfcfcf; }
  .combo { display: flex; align-items: center; width: 172px; height: 24px; margin-left: 1px; padding: 0 6px 0 5px; border: 1px solid #aaa; border-radius: 3px; background: linear-gradient(#fdfdfd, #f0f0f0); }
  .combo select { flex: 1; min-width: 0; appearance: none; border: 0; padding: 0 4px; background: none; color: inherit; font: inherit; }
  .more { margin-left: auto; padding-right: 4px; }

  main { display: flex; flex: 1; min-height: 442px; }
  aside { display: flex; flex-direction: column; flex: none; width: 282px; }
  .dock-title { display: flex; align-items: center; justify-content: space-between; height: 19px; padding: 0 2px 0 4px; }
  .dock-buttons { display: flex; gap: 3px; }
  .dock-buttons svg { fill: none; stroke: #555; stroke-width: 1; }
  .dock-buttons .thick { stroke-width: 2; }
  .tabs { display: flex; align-items: flex-end; height: 26px; margin-bottom: -1px; position: relative; }
  .tabs button { justify-content: center; height: 23px; padding: 0 12px; border: 1px solid #b9b9b9; border-left: 0; border-radius: 0 2px 0 0; background: #e7e7e7; }
  .tabs .active { height: 26px; padding: 2px 12px 0 11px; border-left: 1px solid #b9b9b9; border-bottom-color: #fff; background: #fff; }
  .pane { display: flex; flex: 1; flex-direction: column; padding: 1px 2px 0; border: 1px solid #b0b0b0; border-left-width: 0; background: #fdfdfd; }
  .tree { border: 1px solid #aaa; background: #fff; }
  .tree-body { display: flex; }
  .tree table { flex: 1; }
  th { height: 19px; padding: 1px 2px 0; border-bottom: 1px solid #b5b5b5; background: linear-gradient(#fefefe, #ececec); font-weight: normal; line-height: 17px; text-align: left; }
  .labels { width: 180px; border-right: 1px solid #b5b5b5; }
  td { padding: 0; height: 18px; }
  .node { display: flex; align-items: center; gap: 6px; height: 18px; padding-left: 26px; }
  .node.deep { padding-left: 46px; }
  .twist { width: 11px; height: 8px; }
  .kids { border: 4px solid transparent; border-left: 5px solid #444; border-right: 0; width: 0; margin-left: 2px; margin-right: 4px; }
  .dim { color: #b9b9b9; }
  .vscroll { display: flex; flex-direction: column; width: 14px; border-left: 1px solid #b5b5b5; }
  .vscroll button, .hscroll button { justify-content: center; flex: none; background: #f5f5f5; }
  .vscroll button { height: 14px; }
  .track { background: #dedede; }
  .vscroll .upper { flex: 1; border-top: 1px solid #b5b5b5; }
  .vscroll .thumb { height: 50px; border: solid #b5b5b5; border-width: 1px 0; background: #fafafa; }
  .vscroll .lower { height: 12px; border-bottom: 1px solid #b5b5b5; }
  .up, .down, .lt, .rt { width: 0; border: 4px solid transparent; }
  .up { border-bottom-color: #444; border-top: 0; }
  .down { border-top-color: #444; border-bottom: 0; }
  .lt { border-right-color: #444; border-left: 0; }
  .rt { border-left-color: #444; border-right: 0; }
  .hscroll { display: flex; height: 14px; border-top: 1px solid #b5b5b5; }
  .hscroll button { width: 14px; }
  .hscroll .thumb { flex: 1; border: solid #b5b5b5; border-width: 0 1px; background: #f7f7f7; }
  .hscroll .track { width: 15px; border-right: 1px solid #b5b5b5; }
  .corner { width: 14px; border-left: 1px solid #b5b5b5; background: #efefef; }
  .split { width: 18px; height: 5px; margin: 0 auto; background: radial-gradient(circle, #b5b5b5 35%, transparent 50%) 0 0 / 3px 3px repeat-x; }
  .props { display: flex; flex: 1; padding: 1px; border: 1px solid #aaa; background: #fff; box-shadow: inset 0 0 0 1px #fff, inset 0 0 0 2px #b5b5b5; }
  .props table { flex: 1; height: 19px; border: 1px solid #b5b5b5; }
  .prop { width: 100px; border-right: 1px solid #b5b5b5; }
  .bottom-tabs { display: flex; align-items: flex-start; height: 26px; }
  .bottom-tabs button { height: 22px; padding: 1px 11px 0; border: 1px solid #b9b9b9; border-top: 0; background: #e9e9e9; border-radius: 0 0 3px 3px; }
  .bottom-tabs .active { height: 25px; padding: 0 12px; background: #fff; border-left: 0; }
  .vsplit { width: 6px; align-self: center; height: 18px; background: radial-gradient(circle, #b5b5b5 35%, transparent 50%) 0 0 / 3px 3px repeat-y; }

  .mdi { display: flex; flex: 1; flex-direction: column; min-width: 0; }
  .viewport { position: relative; flex: 1; min-height: 0; overflow: hidden; background: linear-gradient(#333466, #aaaac2); border-bottom: 1px solid #fff; }
  .screen .scene { position: absolute; inset: 0; width: 100%; height: 100%; }
  .navcube { position: absolute; top: 0; right: 0; }
  .axes { position: absolute; right: 0; bottom: 15px; }
  .doc-tabs { display: flex; align-items: flex-start; height: 30px; border-top: 1px solid #b5b5b5; }
  .doc { display: flex; align-items: center; gap: 8px; height: 28px; padding: 0 16px 0 11px; border: 1px solid #bbb; border-top: 0; border-radius: 0 0 3px 3px; background: #dedede; }
  .doc button { gap: 4px; }
  .doc.active { height: 30px; margin: -1px -1px 0 0; background: #f7f7f7; position: relative; }

  .report .split { margin-top: 1px; }
  .report .dock-title { height: 20px; padding-top: 1px; }
  textarea { display: block; width: 100%; height: 70px; margin: 0; border: 1px solid #aaa; background: #fff; resize: none; outline: 0; font: inherit; }
  footer { display: flex; justify-content: space-between; align-items: center; height: 29px; padding: 2px 2px 0; white-space: nowrap; }
  .status-right, .status-right button { display: flex; align-items: center; }
  .status-right { gap: 10px; }
  .status-right button { gap: 4px; }
  .status-right .arrow { margin-left: 4px; }
</style>
